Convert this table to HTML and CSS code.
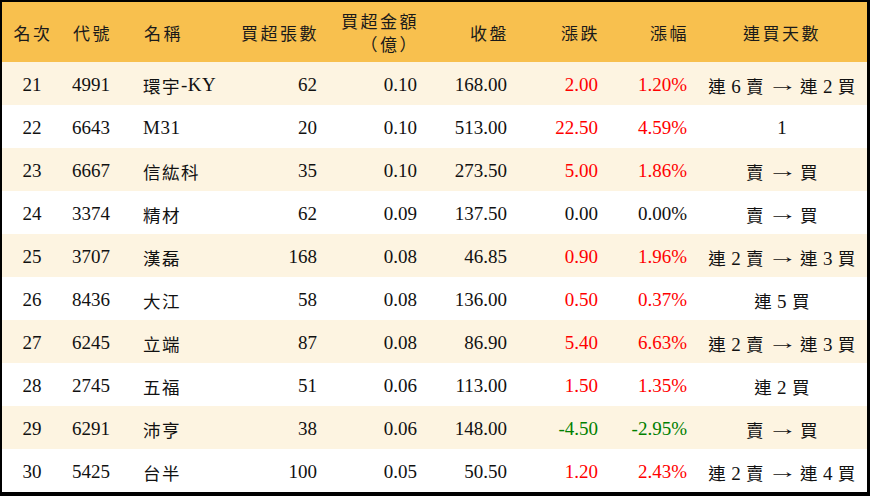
FILE: index.html
```html
<!DOCTYPE html>
<html lang="zh-Hant">
<head>
<meta charset="utf-8">
<link rel="stylesheet" href="styles.css">
</head>
<body>
<div class="board">
  <div class="row head">
    <div class="c c1">名次</div>
    <div class="c c2">代號</div>
    <div class="c c3">名稱</div>
    <div class="c c4">買超張數</div>
    <div class="c c5 two">買超金額<br>（億）</div>
    <div class="c c6">收盤</div>
    <div class="c c7">漲跌</div>
    <div class="c c8">漲幅</div>
    <div class="c c9">連買天數</div>
  </div>
  <div class="row odd"><div class="c c1">21</div><div class="c c2">4991</div><div class="c c3">環宇<span class="lat">-KY</span></div><div class="c c4">62</div><div class="c c5">0.10</div><div class="c c6">168.00</div><div class="c c7 up">2.00</div><div class="c c8 up">1.20%</div><div class="c c9"><span>連 <span class="d">6</span> 賣<span class="ar">→</span>連 <span class="d">2</span> 買</span></div></div>
  <div class="row"><div class="c c1">22</div><div class="c c2">6643</div><div class="c c3"><span class="lat">M31</span></div><div class="c c4">20</div><div class="c c5">0.10</div><div class="c c6">513.00</div><div class="c c7 up">22.50</div><div class="c c8 up">4.59%</div><div class="c c9 num">1</div></div>
  <div class="row odd"><div class="c c1">23</div><div class="c c2">6667</div><div class="c c3">信紘科</div><div class="c c4">35</div><div class="c c5">0.10</div><div class="c c6">273.50</div><div class="c c7 up">5.00</div><div class="c c8 up">1.86%</div><div class="c c9"><span>賣<span class="ar">→</span>買</span></div></div>
  <div class="row"><div class="c c1">24</div><div class="c c2">3374</div><div class="c c3">精材</div><div class="c c4">62</div><div class="c c5">0.09</div><div class="c c6">137.50</div><div class="c c7">0.00</div><div class="c c8">0.00%</div><div class="c c9"><span>賣<span class="ar">→</span>買</span></div></div>
  <div class="row odd"><div class="c c1">25</div><div class="c c2">3707</div><div class="c c3">漢磊</div><div class="c c4">168</div><div class="c c5">0.08</div><div class="c c6">46.85</div><div class="c c7 up">0.90</div><div class="c c8 up">1.96%</div><div class="c c9"><span>連 <span class="d">2</span> 賣<span class="ar">→</span>連 <span class="d">3</span> 買</span></div></div>
  <div class="row"><div class="c c1">26</div><div class="c c2">8436</div><div class="c c3">大江</div><div class="c c4">58</div><div class="c c5">0.08</div><div class="c c6">136.00</div><div class="c c7 up">0.50</div><div class="c c8 up">0.37%</div><div class="c c9"><span>連 <span class="d">5</span> 買</span></div></div>
  <div class="row odd"><div class="c c1">27</div><div class="c c2">6245</div><div class="c c3">立端</div><div class="c c4">87</div><div class="c c5">0.08</div><div class="c c6">86.90</div><div class="c c7 up">5.40</div><div class="c c8 up">6.63%</div><div class="c c9"><span>連 <span class="d">2</span> 賣<span class="ar">→</span>連 <span class="d">3</span> 買</span></div></div>
  <div class="row"><div class="c c1">28</div><div class="c c2">2745</div><div class="c c3">五福</div><div class="c c4">51</div><div class="c c5">0.06</div><div class="c c6">113.00</div><div class="c c7 up">1.50</div><div class="c c8 up">1.35%</div><div class="c c9"><span>連 <span class="d">2</span> 買</span></div></div>
  <div class="row odd"><div class="c c1">29</div><div class="c c2">6291</div><div class="c c3">沛亨</div><div class="c c4">38</div><div class="c c5">0.06</div><div class="c c6">148.00</div><div class="c c7 down">-4.50</div><div class="c c8 down">-2.95%</div><div class="c c9"><span>賣<span class="ar">→</span>買</span></div></div>
  <div class="row"><div class="c c1">30</div><div class="c c2">5425</div><div class="c c3">台半</div><div class="c c4">100</div><div class="c c5">0.05</div><div class="c c6">50.50</div><div class="c c7 up">1.20</div><div class="c c8 up">2.43%</div><div class="c c9"><span>連 <span class="d">2</span> 賣<span class="ar">→</span>連 <span class="d">4</span> 買</span></div></div>
</div>
</body>
</html>
```
FILE: styles.css
```css
html, body {
  margin: 0;
  padding: 0;
  background: #000;
}
.board {
  box-sizing: border-box;
  width: 870px;
  height: 496px;
  border-style: solid;
  border-color: #000;
  border-width: 2px 3px 4px 2px;
  background: #fff;
  display: flex;
  flex-direction: column;
  font-family: "Liberation Serif", "Noto Sans CJK TC", serif;
  font-size: 19px;
  color: #111;
}
.row {
  display: grid;
  grid-template-columns: 60px 71px 104px 90px 100px 90px 91px 89px 170px;
  height: 43px;
  background: #fff;
}
.row.odd {
  background: #fdf4e1;
}
.row.head {
  height: 60px;
  background: #f8c04e;
  font-family: "Noto Sans CJK TC", sans-serif;
  font-size: 17px;
  color: #1a1a1a;
}
.c {
  display: flex;
  align-items: center;
  padding: 3px 10px 0;
  white-space: nowrap;
  letter-spacing: 0;
}
.c3 {
  font-size: 17.5px;
  letter-spacing: 1.5px;
}
.lat {
  font-size: 19px;
  letter-spacing: 0.5px;
}
.head .c {
  font-size: 17px;
  letter-spacing: 2.5px;
  padding-top: 0;
}
.c1 { justify-content: center; padding: 3px 0 0; }
.c2, .c3 { justify-content: flex-start; }
.c4, .c5, .c6, .c7, .c8 { justify-content: flex-end; }
.c9 {
  justify-content: center;
  padding: 3px 0 0;
  font-size: 17.5px;
  letter-spacing: 0.5px;
  white-space: pre;
}
.c9 .d { font-size: 19px; }
.c9.num { font-size: 19px; letter-spacing: 0; }
.head .c4, .head .c5, .head .c6, .head .c7, .head .c8 { padding-right: 8px; }
.head .c1 { padding-left: 2px; }
.head .c2, .head .c3 { padding-left: 11px; }
.two {
  text-align: right;
  line-height: 23px;
  white-space: nowrap;
}
.ar {
  display: inline-block;
  font-family: "Liberation Serif", serif;
  font-size: 19px;
  letter-spacing: 0;
  margin: 0 8px 0 9px;
  vertical-align: 2px;
  transform: scaleX(1.6);
}
.up { color: #ff0000; }
.down { color: #008000; }
```
